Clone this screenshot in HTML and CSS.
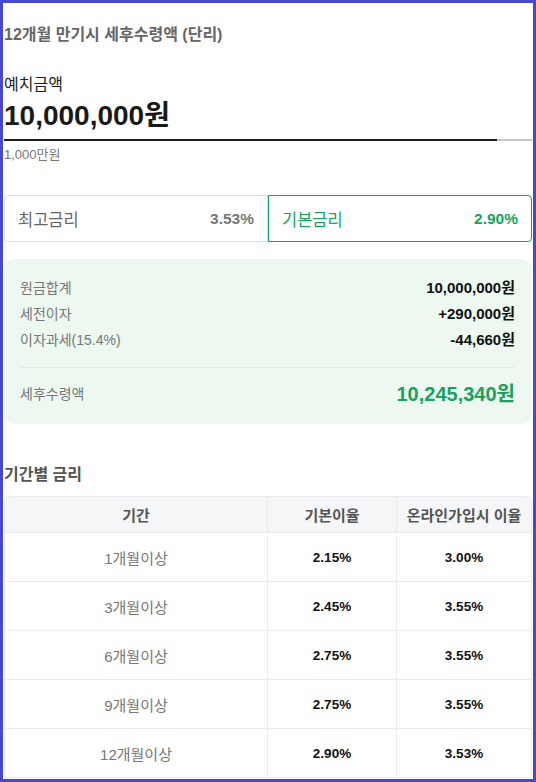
FILE: index.html
```html
<!DOCTYPE html>
<html lang="ko">
<head>
  <meta charset="UTF-8" />
  <meta name="viewport" content="width=device-width, initial-scale=1.0" />
  <title>예금 계산기</title>
  <link rel="stylesheet" href="styles.css">
</head>
<body>
  <div class="frame">
    <h2 class="title">12개월 만기시 세후수령액 (단리)</h2>

    <div class="deposit">
      <div class="deposit-label">예치금액</div>
      <div class="deposit-amount">10,000,000원</div>
      <div class="track"><div class="track-fill" style="width: 93.4%"></div></div>
      <div class="deposit-hint">1,000만원</div>
    </div>

    <div class="rate-tabs">
      <div class="rate-tab">
        <span>최고금리</span>
        <span class="rate-value">3.53%</span>
      </div>
      <div class="rate-tab active">
        <span>기본금리</span>
        <span class="rate-value">2.90%</span>
      </div>
    </div>

    <div class="summary">
      <div class="summary-row"><span>원금합계</span><span class="num">10,000,000원</span></div>
      <div class="summary-row"><span>세전이자</span><span class="num">+290,000원</span></div>
      <div class="summary-row"><span>이자과세(15.4%)</span><span class="num">-44,660원</span></div>
      <div class="summary-line"></div>
      <div class="summary-row total"><span>세후수령액</span><span class="num">10,245,340원</span></div>
    </div>

    <h3 class="section-title">기간별 금리</h3>
    <table class="rates">
      <thead>
        <tr><th>기간</th><th>기본이율</th><th>온라인가입시 이율</th></tr>
      </thead>
      <tbody>
        <tr><td>1개월이상</td><td>2.15%</td><td>3.00%</td></tr>
        <tr><td>3개월이상</td><td>2.45%</td><td>3.55%</td></tr>
        <tr><td>6개월이상</td><td>2.75%</td><td>3.55%</td></tr>
        <tr><td>9개월이상</td><td>2.75%</td><td>3.55%</td></tr>
        <tr><td>12개월이상</td><td>2.90%</td><td>3.53%</td></tr>
      </tbody>
    </table>
  </div>
</body>
</html>
```

FILE: styles.css
```css
html, body {
  margin: 0;
  height: 100%;
}
body {
  font-family: 'Liberation Sans', 'Noto Sans CJK KR', sans-serif;
  color: #222;
  background: #fff;
}
.frame {
  box-sizing: border-box;
  height: 782px;
  overflow: hidden;
  border: 3px solid #4747d1;
  padding: 22px 1px 0 1px;
}
.title {
  margin: 0;
  font-size: 16px;
  line-height: 20px;
  font-weight: bold;
  color: #666;
}
.deposit {
  margin-top: 30px;
}
.deposit-label {
  font-size: 16px;
  line-height: 20px;
  color: #222;
}
.deposit-amount {
  margin-top: 3px;
  font-size: 28px;
  line-height: 36px;
  font-weight: bold;
  color: #191919;
}
.track {
  margin-top: 5px;
  height: 2px;
  background: #c8c8c8;
}
.track-fill {
  height: 2px;
  background: #1e1e22;
}
.deposit-hint {
  margin-top: 6px;
  font-size: 13px;
  line-height: 16px;
  color: #777;
}
.rate-tabs {
  margin-top: 32px;
  display: grid;
  grid-template-columns: 1fr 1fr;
}
.rate-tab {
  display: flex;
  justify-content: space-between;
  align-items: center;
  height: 47px;
  box-sizing: border-box;
  padding: 0 13px 0 13px;
  border: 1px solid #dedede;
  border-radius: 4px 0 0 4px;
  font-size: 16.5px;
  color: #666;
}
.rate-tab .rate-value {
  font-size: 15.5px;
  font-weight: bold;
  color: #777;
}
.rate-tab.active {
  border-color: #17a35e;
  border-radius: 0 4px 4px 0;
  color: #17a35e;
}
.rate-tab.active .rate-value {
  color: #17a35e;
}
.summary {
  margin-top: 17px;
  background: #edf8f1;
  border-radius: 10px;
  padding: 16px 17px 16px 16px;
}
.summary-row {
  display: flex;
  justify-content: space-between;
  font-size: 14px;
  line-height: 26px;
  color: #777;
}
.summary-row .num {
  font-size: 15px;
  font-weight: bold;
  color: #111;
}
.summary-line {
  height: 1px;
  background: #dfeee4;
  margin: 14px 0 12px;
}
.summary-row.total {
  line-height: 28px;
  align-items: center;
}
.summary-row.total .num {
  font-size: 20px;
  color: #17a35e;
}
.section-title {
  margin: 41px 0 11px;
  font-size: 16px;
  line-height: 20px;
  font-weight: bold;
  color: #555;
}
.rates {
  width: 100%;
  border-collapse: separate;
  border-spacing: 0;
  border: 1px solid #eaebef;
  border-radius: 6px 6px 0 0;
  font-size: 13.5px;
}
.rates th, .rates td {
  text-align: center;
  border-left: 1px solid #eaebef;
}
.rates th:first-child, .rates td:first-child {
  border-left: none;
  width: 262px;
}
.rates th:nth-child(2) {
  width: 128px;
}
.rates th {
  height: 35px;
  background: #f5f6f8;
  font-size: 15px;
  font-weight: bold;
  color: #555;
  padding: 0;
}
.rates td {
  height: 48px;
  padding: 0;
  border-top: 1px solid #eaebef;
  font-weight: bold;
  color: #111;
}
.rates td:first-child {
  font-weight: normal;
  font-size: 15px;
  color: #777;
}
```
